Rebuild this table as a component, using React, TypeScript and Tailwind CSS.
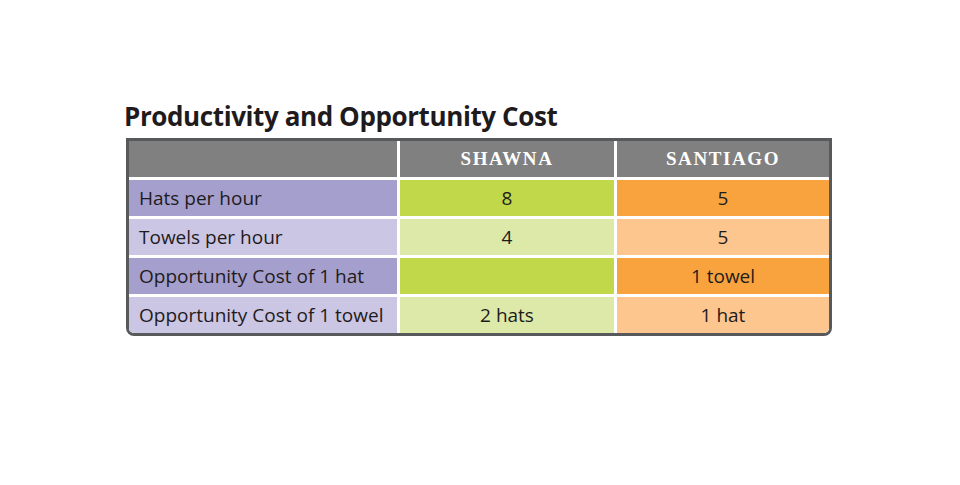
export default function App() {
  const rows = [
    { label: "Hats per hour", shawna: "8", santiago: "5", dark: true },
    { label: "Towels per hour", shawna: "4", santiago: "5", dark: false },
    { label: "Opportunity Cost of 1 hat", shawna: "", santiago: "1 towel", dark: true },
    { label: "Opportunity Cost of 1 towel", shawna: "2 hats", santiago: "1 hat", dark: false },
  ]

  return (
    <div className="w-[960px] h-[485px] bg-white pt-[99px] pl-[124px] font-['Open_Sans',sans-serif] text-[#1f1b1c]">
      <h1 className="text-[26px] leading-[34px] font-bold tracking-[-0.4px]">Productivity and Opportunity Cost</h1>
      <div className="ml-[2px] mt-[5px] w-[706px] border-[3px] border-[#58595b] rounded-b-[8px] overflow-hidden">
        <div className="grid grid-cols-[268px_214px_212px] gap-[3px] bg-white">
          {/* header */}
          <div className="h-[36px] bg-[#808080]" />
          <div className="h-[36px] bg-[#808080] flex items-center justify-center text-white font-['Liberation_Serif',serif] font-bold text-[19px] tracking-[1.6px]">
            SHAWNA
          </div>
          <div className="h-[36px] bg-[#808080] flex items-center justify-center text-white font-['Liberation_Serif',serif] font-bold text-[19px] tracking-[1.6px]">
            SANTIAGO
          </div>

          {rows.map((r) => (
            <>
              <div
                key={r.label}
                className={`h-[36px] flex items-center pl-[10px] text-[19px] ${r.dark ? "bg-[#a59fcd]" : "bg-[#cbc6e4]"}`}
              >
                {r.label}
              </div>
              <div className={`h-[36px] flex items-center justify-center text-[19px] ${r.dark ? "bg-[#c0d849]" : "bg-[#dce9a8]"}`}>
                {r.shawna}
              </div>
              <div className={`h-[36px] flex items-center justify-center text-[19px] ${r.dark ? "bg-[#f9a33f]" : "bg-[#fdc68e]"}`}>
                {r.santiago}
              </div>
            </>
          ))}
        </div>
      </div>
    </div>
  )
}
